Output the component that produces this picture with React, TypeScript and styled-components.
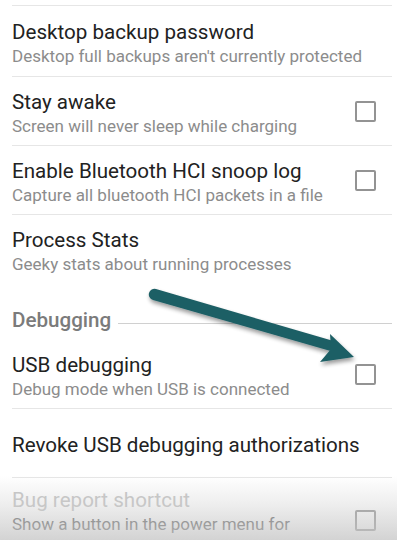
import React from "react";
import styled, { createGlobalStyle } from "styled-components";

const Global = createGlobalStyle`
  html, body { margin: 0; padding: 0; background: #ffffff; }
  body { font-family: Roboto, "Noto Sans", "Liberation Sans", sans-serif; -webkit-font-smoothing: antialiased; }
`;

const Screen = styled.div`
  position: relative;
  width: 397px;
  height: 540px;
  overflow: hidden;
  background: #ffffff;
  padding-top: 5px;
  box-sizing: border-box;
`;

const List = styled.div`
  display: flex;
  flex-direction: column;
  padding: 0 5px 0 12px;
`;

const Row = styled.div<{ $h: number; $divider?: boolean }>`
  display: flex;
  align-items: center;
  flex: none;
  height: ${(p) => p.$h}px;
  border-top: ${(p) => (p.$divider ? "1px solid #e6e6e6" : "1px solid transparent")};
  box-sizing: border-box;
`;

const Texts = styled.div`
  flex: 1;
  display: flex;
  flex-direction: column;
  min-width: 0;
  padding-top: 4px;
`;

const Title = styled.div<{ $disabled?: boolean }>`
  font-size: 20.6px;
  line-height: 24px;
  color: ${(p) => (p.$disabled ? "#c4c4c4" : "#222222")};
  white-space: nowrap;
`;

const Summary = styled.div<{ $dark?: boolean; $first?: boolean }>`
  font-size: 17px;
  line-height: 22px;
  margin-top: ${(p) => (p.$first ? "1px" : "0")};
  color: ${(p) => (p.$dark ? "#5a5a5a" : "#8c8c8c")};
  white-space: nowrap;
`;

const Check = styled.div`
  width: 17px;
  height: 17px;
  border: 2px solid #939393;
  border-radius: 2px;
  margin-right: 16px;
  flex: none;
`;

const Header = styled.div`
  display: flex;
  align-items: flex-end;
  flex: none;
  height: 56px;
  padding-bottom: 7px;
  box-sizing: border-box;
  gap: 7px;
`;

const HeaderText = styled.div`
  font-size: 20.6px;
  font-weight: 500;
  line-height: 24px;
  color: #7b7b7b;
`;

const HeaderLine = styled.div`
  flex: 1;
  height: 1px;
  background: #d0d0d0;
  margin-bottom: 8px;
`;

const BottomShade = styled.div`
  position: absolute;
  left: 0;
  right: 0;
  bottom: 0;
  height: 64px;
  background: linear-gradient(to bottom, rgba(205,205,205,0) 0%, rgba(205,205,205,0.35) 45%, rgba(200,200,200,0.8) 100%);
  pointer-events: none;
`;

const ArrowSvg = styled.svg`
  position: absolute;
  left: 0;
  top: 0;
  pointer-events: none;
`;

const Arrow = () => (
  <ArrowSvg width="397" height="540" viewBox="0 0 397 540">
    <defs>
      <filter id="sh" x="-20%" y="-20%" width="140%" height="140%">
        <feGaussianBlur in="SourceAlpha" stdDeviation="2" />
        <feOffset dx="1" dy="3" result="b" />
        <feComponentTransfer>
          <feFuncA type="linear" slope="0.4" />
        </feComponentTransfer>
        <feMerge>
          <feMergeNode />
          <feMergeNode in="SourceGraphic" />
        </feMerge>
      </filter>
    </defs>
    <g filter="url(#sh)" fill="#1f5f65">
      <path d="M156 289 L337 342 L334 352 L153 300 A5.6 5.6 0 0 1 156 289 Z" />
      <path d="M330 334 L354 357 L320 362 L331 349 Z" />
    </g>
  </ArrowSvg>
);

export default function App() {
  return (
    <>
      <Global />
      <Screen>
        <List>
          <Row $h={71} $divider>
            <Texts>
              <Title>Desktop backup password</Title>
              <Summary $first>Desktop full backups aren't currently protected</Summary>
            </Texts>
          </Row>
          <Row $h={69} $divider>
            <Texts>
              <Title>Stay awake</Title>
              <Summary $first>Screen will never sleep while charging</Summary>
            </Texts>
            <Check />
          </Row>
          <Row $h={69} $divider>
            <Texts>
              <Title>Enable Bluetooth HCI snoop log</Title>
              <Summary $first>Capture all bluetooth HCI packets in a file</Summary>
            </Texts>
            <Check />
          </Row>
          <Row $h={69} $divider>
            <Texts>
              <Title>Process Stats</Title>
              <Summary $first>Geeky stats about running processes</Summary>
            </Texts>
          </Row>
          <Header>
            <HeaderText>Debugging</HeaderText>
            <HeaderLine />
          </Header>
          <Row $h={69}>
            <Texts>
              <Title>USB debugging</Title>
              <Summary $first>Debug mode when USB is connected</Summary>
            </Texts>
            <Check />
          </Row>
          <Row $h={69} $divider>
            <Texts>
              <Title>Revoke USB debugging authorizations</Title>
            </Texts>
          </Row>
          <Row $h={86} $divider>
            <Texts>
              <Title $disabled>Bug report shortcut</Title>
              <Summary $dark $first>Show a button in the power menu for</Summary>
              <Summary $dark>taking a bug report</Summary>
            </Texts>
            <Check />
          </Row>
        </List>
        <BottomShade />
        <Arrow />
      </Screen>
    </>
  );
}
